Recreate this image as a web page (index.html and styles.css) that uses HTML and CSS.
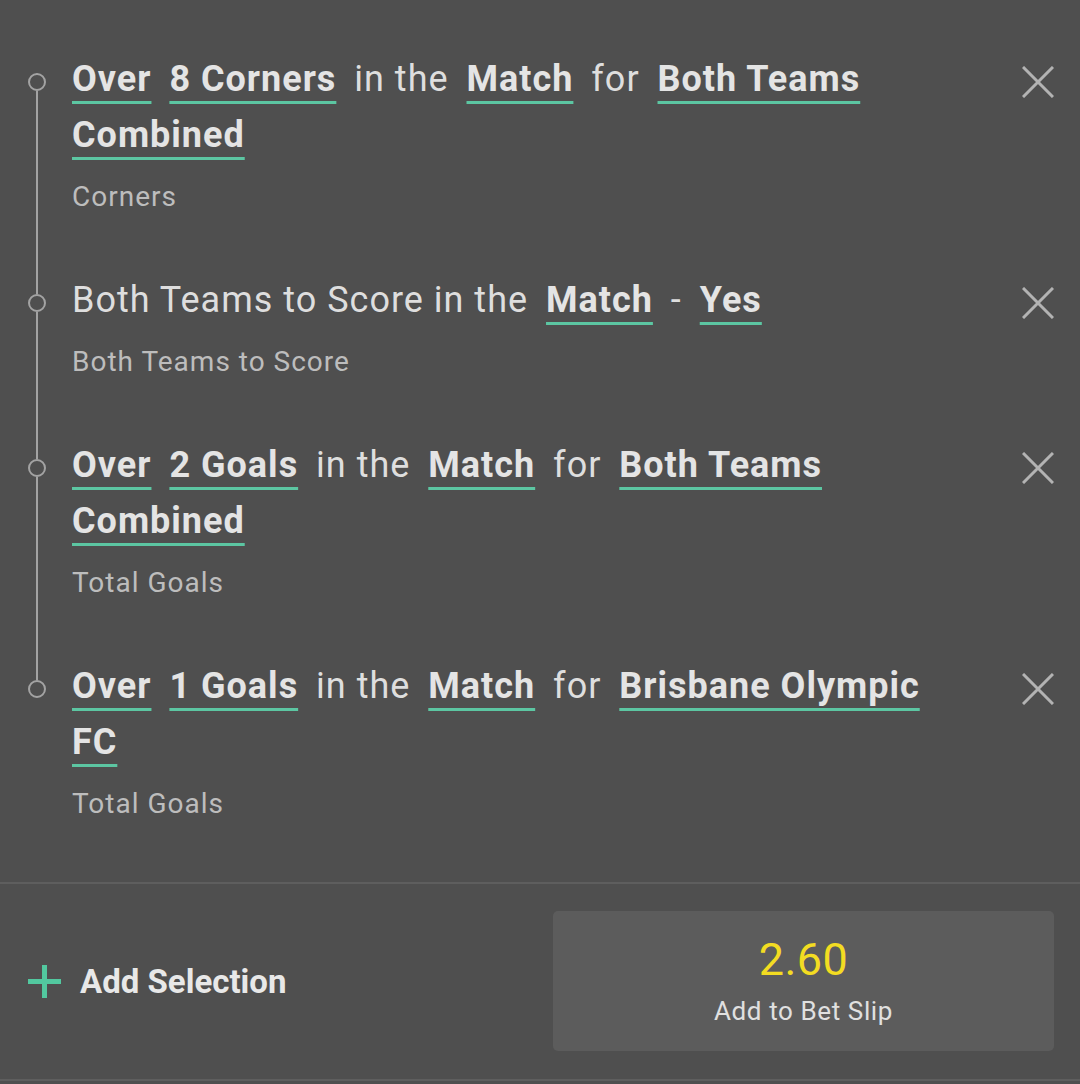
FILE: index.html
```html
<!DOCTYPE html>
<html lang="en">
<head>
  <meta charset="UTF-8">
  <meta name="viewport" content="width=device-width, initial-scale=1.0">
  <title>Bet Builder</title>
  <link rel="stylesheet" href="styles.css">
</head>
<body>

  <div class="legs">
    <div class="leg">
      <div class="leg-body">
        <div class="leg-title"><span class="pick">Over</span> <span class="pick">8 Corners</span> <span class="word">in the</span> <span class="pick">Match</span> <span class="word">for</span> <span class="pick">Both Teams Combined</span></div>
        <div class="leg-market">Corners</div>
      </div>
      <button class="remove" aria-label="Remove">
        <svg width="32" height="32" viewBox="0 0 32 32"><path d="M1 1 L31 31 M31 1 L1 31"/></svg>
      </button>
    </div>

    <div class="leg">
      <div class="leg-body">
        <div class="leg-title"><span class="word">Both Teams to Score in the</span> <span class="pick">Match</span> <span class="word">-</span> <span class="pick">Yes</span></div>
        <div class="leg-market">Both Teams to Score</div>
      </div>
      <button class="remove" aria-label="Remove">
        <svg width="32" height="32" viewBox="0 0 32 32"><path d="M1 1 L31 31 M31 1 L1 31"/></svg>
      </button>
    </div>

    <div class="leg">
      <div class="leg-body">
        <div class="leg-title"><span class="pick">Over</span> <span class="pick">2 Goals</span> <span class="word">in the</span> <span class="pick">Match</span> <span class="word">for</span> <span class="pick">Both Teams Combined</span></div>
        <div class="leg-market">Total Goals</div>
      </div>
      <button class="remove" aria-label="Remove">
        <svg width="32" height="32" viewBox="0 0 32 32"><path d="M1 1 L31 31 M31 1 L1 31"/></svg>
      </button>
    </div>

    <div class="leg">
      <div class="leg-body">
        <div class="leg-title"><span class="pick">Over</span> <span class="pick">1 Goals</span> <span class="word">in the</span> <span class="pick">Match</span> <span class="word">for</span> <span class="pick">Brisbane Olympic FC</span></div>
        <div class="leg-market">Total Goals</div>
      </div>
      <button class="remove" aria-label="Remove">
        <svg width="32" height="32" viewBox="0 0 32 32"><path d="M1 1 L31 31 M31 1 L1 31"/></svg>
      </button>
    </div>
  </div>

  <div class="footer">
    <a class="add-selection" href="#">
      <span class="plus"></span>
      Add Selection
    </a>
    <button class="add-slip">
      <span class="odds">2.60</span>
      <span class="slip-label">Add to Bet Slip</span>
    </button>
  </div>

</body>
</html>
```

FILE: styles.css
```css
body {
  margin: 0;
  padding: 0;
  background-color: #4f4f4f;
  font-family: Roboto, "Liberation Sans", sans-serif;
  color: #e3e3e3;
}

.legs {
  padding-top: 51px;
  padding-bottom: 3px;
}

.leg {
  position: relative;
  display: flex;
  padding: 0 26px 58px 72px;
}

/* timeline dot */
.leg::before {
  content: "";
  position: absolute;
  left: 28px;
  top: 22px;
  width: 14px;
  height: 14px;
  border: 2px solid #a3a3a3;
  border-radius: 50%;
}

/* timeline line down to the next dot */
.leg::after {
  content: "";
  position: absolute;
  left: 36px;
  top: 40px;
  bottom: -22px;
  width: 2px;
  background-color: #a3a3a3;
}

.leg:last-child::after {
  display: none;
}

.leg-body {
  flex: 1;
  margin-right: 74px;
}

.leg-title {
  font-size: 36px;
  line-height: 56px;
  letter-spacing: 1px;
}

.leg-title span {
  margin-right: 8px;
}

.pick {
  font-weight: 700;
  color: #e4e4e4;
  text-decoration: underline;
  text-decoration-color: #5cc6a2;
  text-decoration-thickness: 3px;
  text-underline-offset: 10px;
}

.word {
  color: #dedede;
}

.leg-market {
  margin-top: 17px;
  font-size: 28px;
  line-height: 34px;
  letter-spacing: 1px;
  color: #bdbdbd;
}

.remove {
  margin-top: 15px;
  width: 32px;
  height: 32px;
  padding: 0;
  border: none;
  background: none;
}

.remove svg {
  display: block;
}

.remove path {
  stroke: #b3b3b3;
  stroke-width: 3;
  fill: none;
}

.footer {
  display: flex;
  justify-content: space-between;
  align-items: center;
  padding: 27px 26px 28px 28px;
  border-top: 2px solid #5e5e5e;
  border-bottom: 2px solid #5e5e5e;
}

.add-selection {
  display: flex;
  align-items: center;
  color: #e8e8e8;
  text-decoration: none;
  font-size: 33px;
  font-weight: 700;
}

.plus {
  position: relative;
  width: 33px;
  height: 33px;
  margin-right: 19px;
}

.plus::before,
.plus::after {
  content: "";
  position: absolute;
  background-color: #52c89f;
}

.plus::before {
  left: 0;
  right: 0;
  top: 14px;
  height: 5px;
}

.plus::after {
  top: 0;
  bottom: 0;
  left: 14px;
  width: 5px;
}

.add-slip {
  width: 501px;
  height: 140px;
  border: none;
  border-radius: 5px;
  background-color: #5c5c5c;
  display: flex;
  flex-direction: column;
  align-items: center;
  justify-content: center;
  font-family: Roboto, "Liberation Sans", sans-serif;
}

.odds {
  color: #f3dc22;
  font-size: 45px;
  line-height: 50px;
  letter-spacing: 0.5px;
}

.slip-label {
  color: #e0e0e0;
  font-size: 26px;
  line-height: 34px;
  letter-spacing: 0.6px;
  margin-top: 9px;
}
```
